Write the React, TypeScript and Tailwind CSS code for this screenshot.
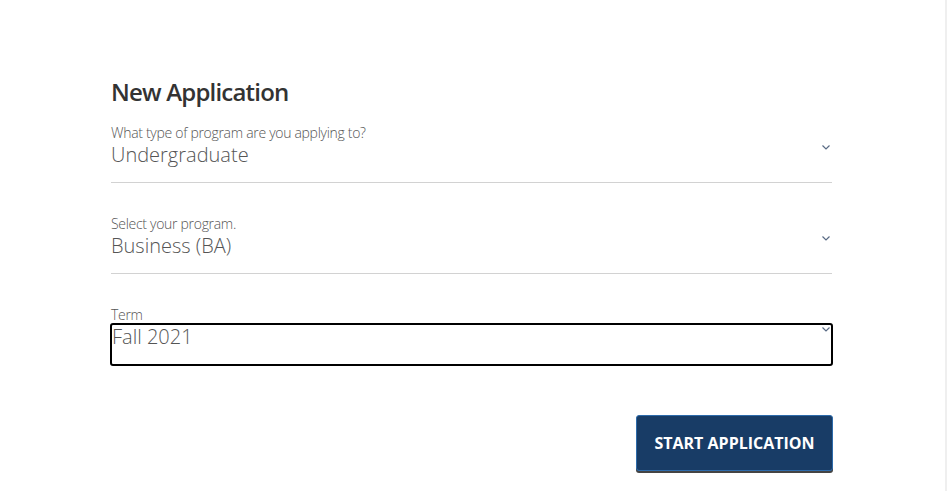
import React from "react";

function Chevron({ className = "" }: { className?: string }) {
  return (
    <svg width="8" height="5" viewBox="0 0 8 5" className={className}>
      <path d="M0.5 0.5 L4 4 L7.5 0.5" fill="none" stroke="#5a6b85" strokeWidth="1.2" />
    </svg>
  );
}

function SelectField({ label, value }: { label: string; value: string }) {
  return (
    <div className="relative border-b border-[#d2d2d2] pb-[14px]">
      <div className="text-[14px] leading-[18px] font-light tracking-[-0.3px] text-[#555]">{label}</div>
      <div className="text-[20px] leading-[26px] font-light text-[#555]">{value}</div>
      <Chevron className="absolute right-[2px] top-[21px]" />
    </div>
  );
}

export default function App() {
  return (
    <div
      className="flex w-[947px] h-[491px] bg-white overflow-hidden"
      style={{ fontFamily: '"Open Sans", "Liberation Sans", sans-serif' }}
    >
      <div className="flex-1 pl-[111px] pt-[76px]">
        <div className="w-[721px] flex flex-col">
          <h1 className="text-[24px] leading-[32px] font-semibold tracking-[-0.8px] text-[#333] mb-[16px]">
            New Application
          </h1>
          <SelectField label="What type of program are you applying to?" value="Undergraduate" />
          <div className="mt-[32px]">
            <SelectField label="Select your program." value="Business (BA)" />
          </div>
          <div className="mt-[32px]">
            <div className="text-[14px] leading-[17px] font-light tracking-[-0.3px] text-[#555]">Term</div>
            <div className="relative h-[43px] border-2 border-black rounded-[3px] -mx-px">
              <div className="text-[20px] leading-[24px] font-light text-[#555]">Fall 2021</div>
              <Chevron className="absolute right-[1px] top-[2px]" />
            </div>
          </div>
          <div className="flex justify-end mt-[49px]">
            <button className="w-[197px] h-[56px] -mr-px bg-[#183c66] border border-[#2d6bab] rounded-[3px] shadow-[0_2px_0_#444] text-white text-[16px] font-bold">
              START APPLICATION
            </button>
          </div>
        </div>
      </div>
      <div className="w-[2px] h-full bg-[#efefef]" />
    </div>
  );
}
